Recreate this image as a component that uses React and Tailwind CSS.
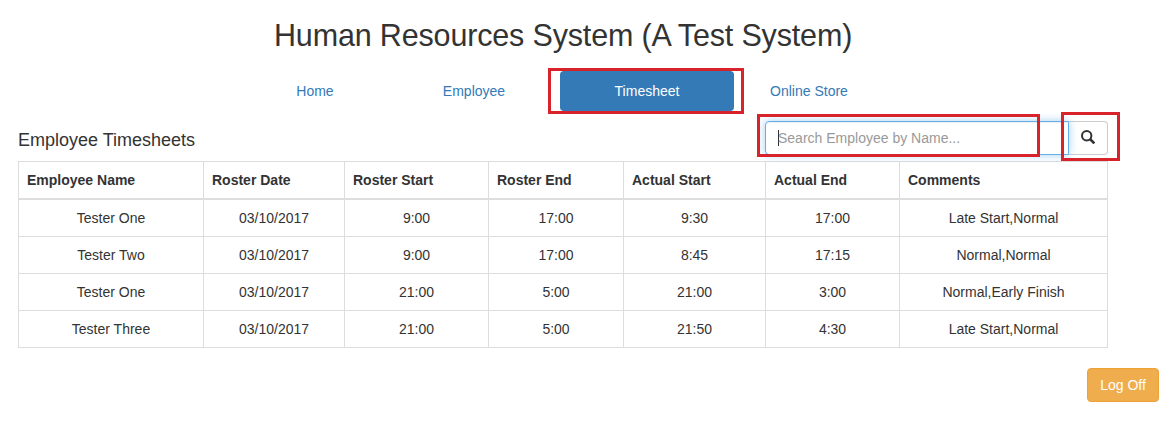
const columns = [
  { label: 'Employee Name', width: 'w-[185px]' },
  { label: 'Roster Date', width: 'w-[141px]' },
  { label: 'Roster Start', width: 'w-[144px]' },
  { label: 'Roster End', width: 'w-[135px]' },
  { label: 'Actual Start', width: 'w-[142px]' },
  { label: 'Actual End', width: 'w-[134px]' },
  { label: 'Comments', width: 'w-[208px]' },
];

const rows = [
  ['Tester One', '03/10/2017', '9:00', '17:00', '9:30', '17:00', 'Late Start,Normal'],
  ['Tester Two', '03/10/2017', '9:00', '17:00', '8:45', '17:15', 'Normal,Normal'],
  ['Tester One', '03/10/2017', '21:00', '5:00', '21:00', '3:00', 'Normal,Early Finish'],
  ['Tester Three', '03/10/2017', '21:00', '5:00', '21:50', '4:30', 'Late Start,Normal'],
];

function Nav() {
  return (
    <nav className="ml-[236px] mt-[17px] flex h-10 text-center leading-10 text-[#337ab7]">
      <a className="w-[158px]">Home</a>
      <a className="ml-[1px] w-[158px]">Employee</a>
      <a className="relative ml-[7px] w-[174px] rounded bg-[#337ab7] text-white">
        Timesheet
        <span className="absolute -left-3 -top-[3px] h-[46px] w-[196px] border-[3px] border-[#d9232b]" />
      </a>
      <a className="w-[150px]">Online Store</a>
    </nav>
  );
}

function SearchBox() {
  return (
    <div className="relative flex h-[34px] w-[343px]">
      <div className="z-10 flex w-[304px] items-center rounded-l border border-[#66afe9] pl-3 text-[#999] shadow-[inset_0_1px_1px_rgba(0,0,0,0.075),0_0_8px_rgba(102,175,233,0.6)]">
        <span className="h-4 w-px bg-[#333]" />
        <span className="-ml-px">Search Employee by Name...</span>
      </div>
      <button className="flex w-[39px] items-center justify-center rounded-r border border-l-0 border-[#ccc] bg-white">
        <svg className="-mt-0.5" width="14" height="14" viewBox="0 0 14 14" fill="none" stroke="#333">
          <circle cx="5.7" cy="5.7" r="4.7" strokeWidth="2" />
          <path d="M9 9l4.4 4.4" strokeWidth="2.6" />
        </svg>
      </button>
      <span className="absolute -left-2 -top-[7px] z-20 h-[43px] w-[283px] border-[3px] border-[#d9232b]" />
      <span className="absolute left-[296px] -top-[9px] z-20 h-[49px] w-[59px] border-[3px] border-[#d9232b]" />
    </div>
  );
}

function Timesheets() {
  return (
    <table className="ml-[18px] mt-[6px] w-[1090px] table-fixed border-separate border-spacing-0 border-r border-t border-[#ddd]">
      <thead>
        <tr className="h-[38px]">
          {columns.map((c) => (
            <th key={c.label} className={`${c.width} border-b-2 border-l border-[#ddd] px-2 py-0 text-left font-bold`}>
              {c.label}
            </th>
          ))}
        </tr>
      </thead>
      <tbody>
        {rows.map((row, i) => (
          <tr key={i} className="h-[37px]">
            {row.map((cell, j) => (
              <td key={j} className="border-b border-l border-[#ddd] px-2 py-0 text-center">{cell}</td>
            ))}
          </tr>
        ))}
      </tbody>
    </table>
  );
}

export default function App() {
  return (
    <div className="h-[427px] w-[1172px] overflow-hidden bg-white font-['Liberation_Sans',Arial,sans-serif] text-[14px] leading-5 text-[#333]">
      <h1 className="ml-[274px] pt-[17px] text-[30.5px] leading-[37px] tracking-[-0.16px]">Human Resources System (A Test System)</h1>
      <Nav />
      <div className="ml-[18px] mt-[10px] flex w-[1090px] items-start justify-between">
        <h2 className="pt-[9px] text-[18px] leading-5">Employee Timesheets</h2>
        <SearchBox />
      </div>
      <Timesheets />
      <button className="ml-[1087px] mt-5 block h-[34px] w-[72px] rounded border border-[#eea236] bg-[#f0ad4e] text-white">
        Log Off
      </button>
    </div>
  );
}
